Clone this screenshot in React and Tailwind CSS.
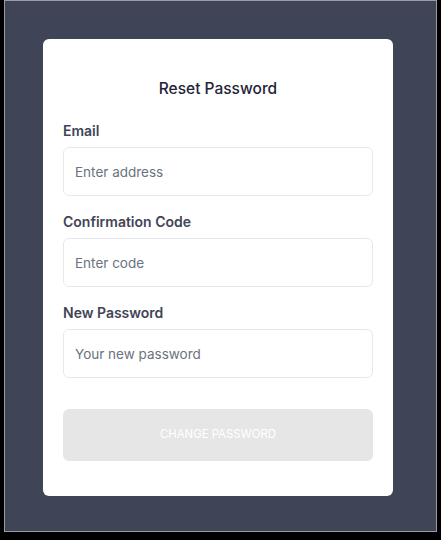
import React from 'react';

const Field = ({ label, placeholder, type = 'text' }) => (
  <div className="flex flex-col">
    <label className="text-[14px] leading-4 font-semibold text-[#3f4456] mb-2">{label}</label>
    <input
      type={type}
      placeholder={placeholder}
      className="h-[49px] w-full rounded-md border border-[#e5e9ef] bg-white px-[11px] text-[13.5px] text-gray-700 placeholder:text-[#6b7280] outline-none"
    />
  </div>
);

const App = () => {
  return (
    <div className="w-[441px] h-[540px] bg-black" style={{ fontFamily: 'Inter, "Noto Sans", sans-serif' }}>
      <div className="ml-[4px] w-[433px] h-[532px] border border-[#9a9ca3] bg-[#3f4456] pt-[38px] pl-[38px]">
        <div className="w-[350px] h-[457px] rounded-md bg-white px-5 pt-[40px]">
          <h1 className="text-center text-[15.5px] leading-5 font-medium text-[#1f2437]">Reset Password</h1>
          <div className="mt-[24px] flex flex-col gap-[18px]">
            <Field label="Email" placeholder="Enter address" />
            <Field label="Confirmation Code" placeholder="Enter code" />
            <Field label="New Password" placeholder="Your new password" type="password" />
          </div>
          <button
            disabled
            className="mt-[31px] h-[52px] w-full rounded-md bg-[#e6e6e6] text-white text-[11.4px]"
          >
            CHANGE PASSWORD
          </button>
        </div>
      </div>
    </div>
  );
};

export default App;
